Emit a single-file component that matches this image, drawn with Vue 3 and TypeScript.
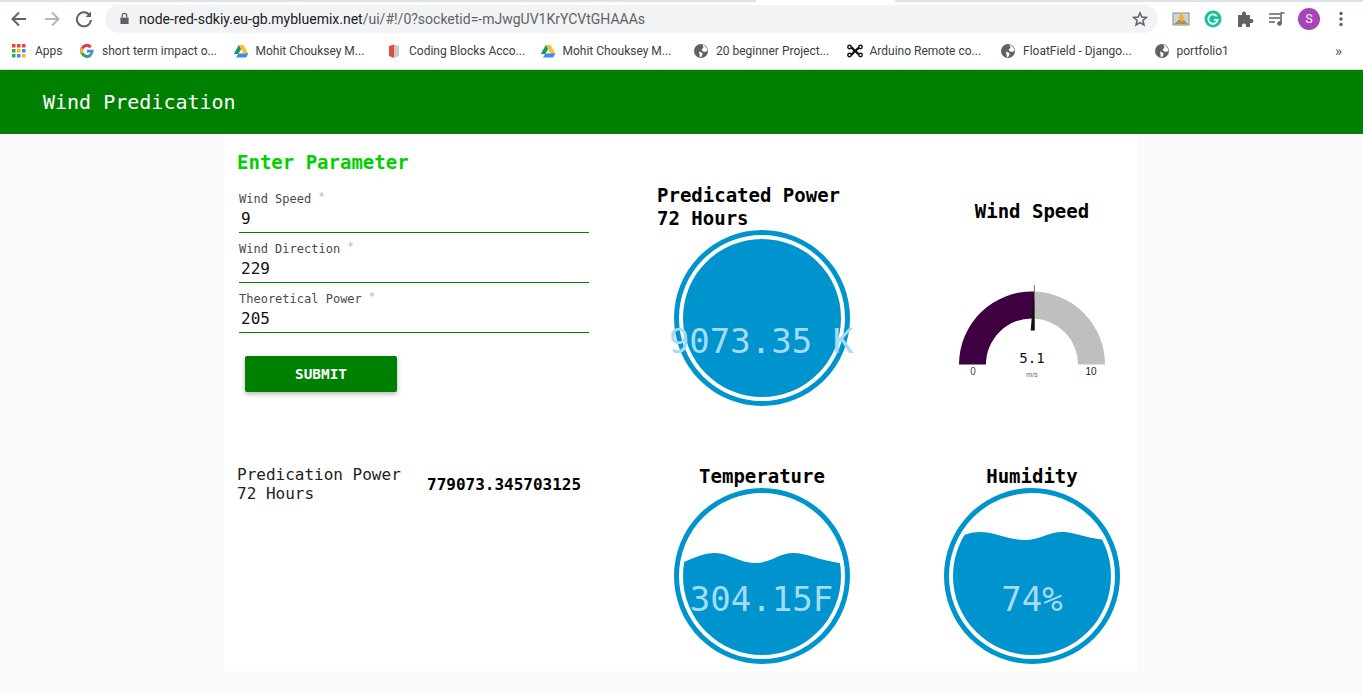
<script setup lang="ts">
type Icon = 'google' | 'drive' | 'cube' | 'globe' | 'arduino'

const bookmarks: { icon: Icon; label: string }[] = [
  { icon: 'google', label: 'short term impact o...' },
  { icon: 'drive', label: 'Mohit Chouksey M...' },
  { icon: 'cube', label: 'Coding Blocks Acco...' },
  { icon: 'drive', label: 'Mohit Chouksey M...' },
  { icon: 'globe', label: '20 beginner Project...' },
  { icon: 'arduino', label: 'Arduino Remote co...' },
  { icon: 'globe', label: 'FloatField - Django...' },
  { icon: 'globe', label: 'portfolio1' },
]

const fields = [
  { label: 'Wind Speed', value: '9' },
  { label: 'Wind Direction', value: '229' },
  { label: 'Theoretical Power', value: '205' },
]

const dotColors = ['#ea4335', '#ea4335', '#ea4335', '#34a853', '#fbbc05', '#4285f4', '#34a853', '#4285f4', '#fbbc05']
const dots = dotColors.map((fill, i) => ({ fill, x: (i % 3) * 5, y: Math.floor(i / 3) * 5 }))

const fullWater = 'M0 0H176V176H0Z'
const tempWater = 'M0 78C14 73 27 65 41 65C55 65 65 75 81 75C97 75 105 65 119 65C135 65 150 75 176 76V176H0Z'
const humWater = 'M0 56C12 50 24 44 36 44C52 44 64 52 81 52C96 52 104 44 118 44C132 44 144 52 176 53V176H0Z'
</script>

<template>
  <div class="page">
    <div class="tabstrip"><div class="active-tab"></div></div>

    <div class="toolbar">
      <svg class="nav" viewBox="0 0 18 18"><path d="M16 9H3.500M9 2.500 2.500 9 9 15.500" fill="none" stroke="#5f6368" stroke-width="2" /></svg>
      <svg class="nav" viewBox="0 0 18 18"><path d="M2 9h12.500M9 2.500 15.500 9 9 15.500" fill="none" stroke="#b4b6b9" stroke-width="2" /></svg>
      <svg class="nav" viewBox="0 0 18 18"><path d="M14.600 5.200A7 7 0 1 0 15.900 10" fill="none" stroke="#5f6368" stroke-width="2" /><path d="M16 1.500V7h-5.500Z" fill="#5f6368" /></svg>
      <div class="omnibox">
        <svg class="lock" viewBox="0 0 12 14"><path d="M1.500 6h9v7h-9Z" fill="#5f6368" /><path d="M3.500 6V4a2.500 2.500 0 0 1 5 0v2" fill="none" stroke="#5f6368" stroke-width="1.400" /></svg>
        <span class="url"><span class="host">node-red-sdkiy.eu-gb.mybluemix.net</span>/ui/#!/0?socketid=-mJwgUV1KrYCVtGHAAAs</span>
        <svg class="star" viewBox="0 0 16 16"><path d="M8 1.800 9.800 6l4.600.4-3.500 3 1.100 4.500L8 11.500l-4 2.400 1.100-4.500-3.500-3L6.200 6Z" fill="none" stroke="#5f6368" stroke-width="1.500" /></svg>
      </div>
      <div class="tools">
        <svg class="tool" viewBox="0 0 18 18"><rect x="1" y="3" width="16" height="12" fill="#c9d6e2" stroke="#8b8b8b" /><path d="M2 14 8 9l2 2 2-1 4 4Z" fill="#b98f3a" /><path d="M8 3.500h3V7h2l-3.500 5L6 7h2Z" fill="#eeb52c" /></svg>
        <svg class="tool" viewBox="0 0 18 18"><circle cx="9" cy="9" r="8.500" fill="#15c39a" /><path d="M12.800 6.200A4.700 4.700 0 1 0 13.700 9.800H10" fill="none" stroke="#fff" stroke-width="1.800" /></svg>
        <svg class="tool" viewBox="0 0 18 18"><path d="M2 5h4V3.500a2 2 0 0 1 4 0V5h4v4h1.500a2 2 0 0 1 0 4H14v4H10v-1.500a2 2 0 0 0-4 0V17H2Z" fill="#5f6368" /></svg>
        <svg class="tool" viewBox="0 0 18 18"><path d="M1 4h11M1 8h11M1 12h6" stroke="#5f6368" stroke-width="1.600" /><path d="M13 13V3h3.500" fill="none" stroke="#5f6368" stroke-width="1.600" /><circle cx="11.500" cy="13.500" r="2.300" fill="#5f6368" /></svg>
        <span class="avatar">S</span>
        <svg class="tool" viewBox="0 0 18 18"><circle cx="9" cy="3.500" r="1.700" fill="#5f6368" /><circle cx="9" cy="9" r="1.700" fill="#5f6368" /><circle cx="9" cy="14.500" r="1.700" fill="#5f6368" /></svg>
      </div>
    </div>

    <div class="bookmarks">
      <div class="apps">
        <svg class="fav" viewBox="0 0 14 14"><rect v-for="(d, i) in dots" :key="i" :x="d.x" :y="d.y" width="3.500" height="3.500" :fill="d.fill" /></svg>
        <span>Apps</span>
      </div>
      <div v-for="(b, i) in bookmarks" :key="i" class="mark">
        <svg class="fav" viewBox="0 0 16 16">
          <template v-if="b.icon === 'google'">
            <path d="M14.500 6.700H8v2.700h3.800A4 4 0 1 1 10.700 5l2-2A6.800 6.800 0 1 0 14.500 6.700Z" fill="#4285f4" />
            <path d="M2.100 4.500 4.400 6.200A4 4 0 0 1 10.700 5l2-2A6.800 6.800 0 0 0 2.100 4.500Z" fill="#ea4335" />
            <path d="M1.900 11 4.300 9.400a4 4 0 0 1 0-3.200L2.100 4.500a6.800 6.800 0 0 0-.2 6.500Z" fill="#fbbc05" />
            <path d="M1.900 11A6.800 6.800 0 0 0 12.700 13L10.600 11.200A4 4 0 0 1 4.300 9.400Z" fill="#34a853" />
          </template>
          <template v-else-if="b.icon === 'drive'">
            <path d="M5.500 1.500h4.700L5 10.500 0.500 10.500Z" fill="#0f9d58" transform="translate(.3 .5)" />
            <path d="M5.700 2h4.800l5 9h-4.800Z" fill="#fbc02d" />
            <path d="M3 14.500 5.400 10.500H15.500L13 14.500Z" fill="#4285f4" />
          </template>
          <template v-else-if="b.icon === 'cube'">
            <path d="M3 3 8 1.500V15L3 13Z" fill="#e8483f" />
            <path d="M8 1.500 13 3V13L8 15Z" fill="#c9c9c9" />
          </template>
          <template v-else-if="b.icon === 'arduino'">
            <path d="M3 4C6 4 6 7 8 8S11 12 14 12M3 12C6 12 6 9 8 8S11 4 14 4" fill="none" stroke="#111" stroke-width="2.400" />
            <circle cx="2.500" cy="4" r="1.700" fill="#fff" stroke="#111" stroke-width="1.400" />
            <circle cx="13.500" cy="4" r="1.700" fill="#fff" stroke="#111" stroke-width="1.400" />
            <circle cx="2.500" cy="12" r="1.700" fill="#fff" stroke="#111" stroke-width="1.400" />
            <circle cx="13.500" cy="12" r="1.700" fill="#fff" stroke="#111" stroke-width="1.400" />
          </template>
          <template v-else>
            <circle cx="8" cy="8" r="7" fill="#5f6368" />
            <path d="M6 8.500 9.500 10 9 13l-2 1.600ZM9.500 1.500C13 3 14 5 14.500 8L11 9 8.500 7l2-2.500Z" fill="#fff" />
          </template>
        </svg>
        <span>{{ b.label }}</span>
      </div>
      <span class="more">»</span>
    </div>

    <header class="banner">Wind Predication</header>

    <main class="card">
      <section class="form">
        <h2 class="form-title">Enter Parameter</h2>
        <div v-for="f in fields" :key="f.label" class="field">
          <div class="field-label">{{ f.label }} <sup>*</sup></div>
          <div class="field-value">{{ f.value }}</div>
        </div>
        <button class="submit" type="button">SUBMIT</button>
      </section>

      <section class="liquid-cell first">
        <h3 class="title left">Predicated Power<br />72 Hours</h3>
        <svg class="liquid" viewBox="0 0 176 176">
          <defs>
            <clipPath id="inner"><circle cx="88" cy="88" r="79" /></clipPath>
          </defs>
          <circle cx="88" cy="88" r="85.500" fill="none" stroke="#0094ce" stroke-width="5" />
          <path :d="fullWater" fill="#0094ce" clip-path="url(#inner)" />
          <text x="87" y="123" text-anchor="middle" class="liquid-text">9073.35 K</text>
        </svg>
      </section>

      <section class="gauge-cell">
        <h3 class="title">Wind Speed</h3>
        <svg class="gauge" viewBox="0 0 170 110">
          <path d="M12 84.500A73 73 0 0 1 87.300 11.500V38.500A46 46 0 0 0 39 84.500Z" fill="#3e0040" />
          <path d="M87.300 11.500A73 73 0 0 1 158 84.500H131A46 46 0 0 0 87.300 38.500Z" fill="#bfbfbf" />
          <path d="M87.400 5 87.800 50.500H83.700Z" fill="#111" />
          <path d="M87.400 5V18" stroke="#777" stroke-width="1" />
          <text x="85" y="83" text-anchor="middle" class="gauge-value">5.1</text>
          <text x="26" y="95" text-anchor="middle" class="gauge-min">0</text>
          <text x="144" y="95" text-anchor="middle" class="gauge-max">10</text>
          <text x="85" y="97" text-anchor="middle" class="gauge-unit">m/s</text>
        </svg>
      </section>

      <section class="result">
        <div class="result-label">Predication Power<br />72 Hours</div>
        <div class="result-value">779073.345703125</div>
      </section>

      <section class="liquid-cell">
        <h3 class="title">Temperature</h3>
        <svg class="liquid" viewBox="0 0 176 176">
          <circle cx="88" cy="88" r="85.500" fill="none" stroke="#0094ce" stroke-width="5" />
          <path :d="tempWater" fill="#0094ce" clip-path="url(#inner)" />
          <text x="87.500" y="123" text-anchor="middle" class="liquid-text">304.15F</text>
        </svg>
      </section>

      <section class="liquid-cell">
        <h3 class="title">Humidity</h3>
        <svg class="liquid" viewBox="0 0 176 176">
          <circle cx="88" cy="88" r="85.500" fill="none" stroke="#0094ce" stroke-width="5" />
          <path :d="humWater" fill="#0094ce" clip-path="url(#inner)" />
          <text x="88" y="123" text-anchor="middle" class="liquid-text">74%</text>
        </svg>
      </section>
    </main>
  </div>
</template>

<style scoped>
.page {
  width: 1363px;
  height: 695px;
  overflow: hidden;
  background: #fafafa;
  font-family: "DejaVu Sans Mono", "Liberation Mono", monospace;
}
.tabstrip {
  height: 2px;
  background: #dee1e6;
  padding-left: 756px;
}
.active-tab {
  width: 139px;
  height: 2px;
  background: #fff;
}
.toolbar {
  height: 33px;
  background: #fff;
  display: flex;
  align-items: center;
  padding-left: 10px;
}
.nav {
  width: 18px;
  height: 18px;
  margin-right: 14.500px;
  flex: none;
}
.omnibox {
  width: 1053px;
  height: 28px;
  margin-left: -2.500px;
  border-radius: 14px;
  background: #f1f3f4;
  display: flex;
  align-items: center;
  padding: 0 10px 0 14px;
  box-sizing: border-box;
  font-family: Roboto, "Open Sans", sans-serif;
}
.lock {
  width: 11px;
  height: 13px;
  flex: none;
  margin-right: 9px;
}
.url {
  flex: 1;
  font-size: 14px;
  color: #5f6368;
}
.host { color: #202124; }
.star {
  width: 16px;
  height: 16px;
}
.tools {
  display: flex;
  align-items: center;
  margin-left: 14px;
  gap: 14px;
}
.tool {
  width: 18px;
  height: 18px;
  flex: none;
}
.avatar {
  width: 22px;
  height: 22px;
  margin: 0 -2px;
  border-radius: 50%;
  background: #a744b8;
  color: #fff;
  font: 12px Roboto, sans-serif;
  display: flex;
  align-items: center;
  justify-content: center;
}
.bookmarks {
  height: 35px;
  box-sizing: border-box;
  background: #fff;
  border-bottom: 1px solid #d9dadc;
  display: flex;
  align-items: center;
  padding: 0 0 2px 12px;
  font-family: Roboto, "Open Sans", sans-serif;
  font-size: 12px;
  color: #3c4043;
}
.apps {
  width: 67px;
  display: flex;
  align-items: center;
  gap: 9px;
  flex: none;
}
.apps .fav {
  width: 14px;
  height: 14px;
}
.mark {
  width: 153.500px;
  display: flex;
  align-items: center;
  gap: 7px;
  flex: none;
  white-space: nowrap;
}
.fav {
  width: 16px;
  height: 16px;
  flex: none;
}
.more {
  margin-left: 28px;
  font-size: 15px;
  color: #5f6368;
}
.banner {
  height: 64px;
  background: #008000;
  color: #fff;
  font-size: 20px;
  line-height: 64px;
  padding-left: 43px;
}
.card {
  width: 913px;
  height: 537px;
  margin-left: 224px;
  background: #fff;
  display: grid;
  grid-template-columns: 403px 270px 210px;
  column-gap: 0;
  grid-template-rows: 306px 231px;
}
.card > :nth-child(3n) {
  margin-left: 30px;
  width: 210px;
}
.form {
  padding: 16px 0 0 13px;
}
.form-title {
  margin: 0 0 9px;
  font-size: 19px;
  line-height: 24px;
  font-weight: 700;
  color: #00d000;
}
.field {
  width: 350px;
  height: 50px;
  box-sizing: border-box;
  margin-left: 2px;
  padding-top: 9px;
  border-bottom: 1px solid #008000;
}
.field-label {
  font-size: 12px;
  line-height: 15px;
  color: #4a4a4a;
}
.field-label sup {
  font-size: 10px;
  line-height: 0;
  color: #b0b0b0;
  vertical-align: 3px;
}
.field-value {
  padding-left: 2px;
  font-size: 16px;
  line-height: 24px;
  color: #111;
}
.submit {
  display: block;
  width: 152px;
  height: 36px;
  margin: 23px 0 0 8px;
  border: 0;
  border-radius: 2px;
  background: #008000;
  color: #fff;
  font: 700 14.400px "DejaVu Sans Mono", monospace;
  box-shadow: 0 2px 5px rgba(0, 0, 0, 0.3);
}
.liquid-cell {
  display: flex;
  flex-direction: column;
  align-items: center;
  padding-top: 25px;
  box-sizing: border-box;
}
.liquid-cell.first {
  padding-top: 50px;
}
.title {
  margin: 0;
  font-size: 19px;
  line-height: 23px;
  font-weight: 700;
  color: #000;
  text-align: center;
  white-space: nowrap;
}
.title.left {
  align-self: flex-start;
  margin-left: 30px;
  text-align: left;
}
.liquid {
  width: 176px;
  height: 176px;
  flex: none;
  overflow: visible;
}
.liquid-text {
  font-family: "DejaVu Sans Mono", monospace;
  font-size: 34px;
  fill: #a4dbf8;
}
.gauge-cell {
  display: flex;
  flex-direction: column;
  align-items: center;
  padding-top: 66px;
  box-sizing: border-box;
}
.gauge {
  width: 170px;
  height: 110px;
  margin-top: 56.500px;
  flex: none;
}
.gauge-value {
  font-family: "DejaVu Sans Mono", monospace;
  font-size: 14px;
  fill: #111;
}
.gauge-min,
.gauge-max {
  font-family: "Liberation Sans", sans-serif;
  font-size: 10px;
  fill: #444c66;
}
.gauge-max { fill: #222; }
.gauge-unit {
  font-family: "Liberation Sans", sans-serif;
  font-size: 7px;
  fill: #7a5a50;
}
.result {
  display: flex;
  align-items: center;
  align-self: start;
  margin-top: 25px;
  padding-left: 13px;
  color: #222;
}
.result-label {
  width: 190px;
  flex: none;
  font-size: 16px;
  line-height: 19px;
}
.result-value {
  font-size: 16px;
  font-weight: 700;
  color: #000;
  white-space: nowrap;
}
</style>

<style>
body {
  background: #fafafa;
}
</style>
